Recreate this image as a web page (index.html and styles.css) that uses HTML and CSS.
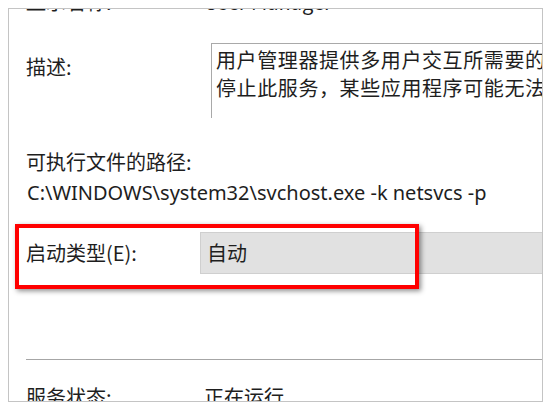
FILE: index.html
```html
<!DOCTYPE html>
<html lang="zh-CN">
<head>
<meta charset="utf-8">
<title>User Manager 属性</title>
<link rel="stylesheet" href="styles.css">
</head>
<body>
<div class="window">
  <div class="content">
    <div class="row row-name">
      <span class="label">显示名称:</span>
      <span class="value">User Manager</span>
    </div>
    <div class="row row-desc">
      <span class="label label-desc">描述:</span>
      <div class="textbox">
        <span class="line">用户管理器提供多用户交互所需要的运行时组件。如果</span>
        <span class="line">停止此服务，某些应用程序可能无法正常运行。</span>
      </div>
    </div>
    <div class="path-label">可执行文件的路径:</div>
    <div class="path-value">C:\WINDOWS\system32\svchost.exe -k netsvcs -p</div>
    <div class="row row-startup">
      <span class="label">启动类型(E):</span>
      <div class="combo">自动</div>
      <div class="highlight"></div>
    </div>
    <div class="separator"></div>
    <div class="row row-status">
      <span class="label">服务状态:</span>
      <span class="value">正在运行</span>
    </div>
  </div>
</div>
</body>
</html>
```
FILE: styles.css
```css
html, body {
  background: #ffffff;
}
body {
  margin: 8px;
  font-family: "Noto Sans CJK SC", "Noto Sans", sans-serif;
  font-size: 20px;
  line-height: 28px;
  color: #1e1e1e;
}
.window {
  width: 533px;
  height: 392px;
  border: 1px solid #c4c4c4;
  background: #ffffff;
  box-shadow: 2px 2px 4px rgba(0, 0, 0, 0.45);
  overflow: hidden;
}
.content {
  margin-top: -21px;
  padding-left: 17px;
}
.row {
  display: flex;
  align-items: flex-start;
  position: relative;
}
.label {
  width: 174px;
  flex: none;
  white-space: nowrap;
}
.value {
  white-space: nowrap;
  padding-left: 4px;
}
.row-desc {
  margin-top: 27px;
}
.label-desc {
  margin-top: 10px;
}
.textbox {
  margin-left: 11px;
  width: 520px;
  height: 75px;
  flex: none;
  border-top: 1px solid #a9a9a9;
  border-left: 1px solid #a9a9a9;
  padding: 2px 0 0 4px;
  box-sizing: border-box;
  overflow: hidden;
  letter-spacing: 0.6px;
}
.line {
  display: block;
  white-space: nowrap;
}
.path-label {
  margin-top: 30px;
  white-space: nowrap;
}
.path-value {
  margin-top: 3px;
  padding-left: 1px;
  white-space: nowrap;
  font-family: "Noto Sans", "Noto Sans CJK SC", sans-serif;
  font-size: 20px;
}
.row-startup {
  margin-top: 25px;
  align-items: center;
}
.combo {
  flex: none;
  width: 360px;
  height: 42px;
  box-sizing: border-box;
  background: #e1e1e1;
  border: 1px solid #cfcfcf;
  padding-left: 6px;
  line-height: 40px;
}
.highlight {
  position: absolute;
  left: -11px;
  top: -8px;
  width: 404px;
  height: 65px;
  box-sizing: border-box;
  border: 4px solid #ff0000;
  box-shadow: 2px 2px 5px rgba(0, 0, 0, 0.45);
}
.separator {
  margin-top: 85px;
  height: 1px;
  background: #a6a6a6;
}
.row-status {
  margin-top: 23px;
}
```
